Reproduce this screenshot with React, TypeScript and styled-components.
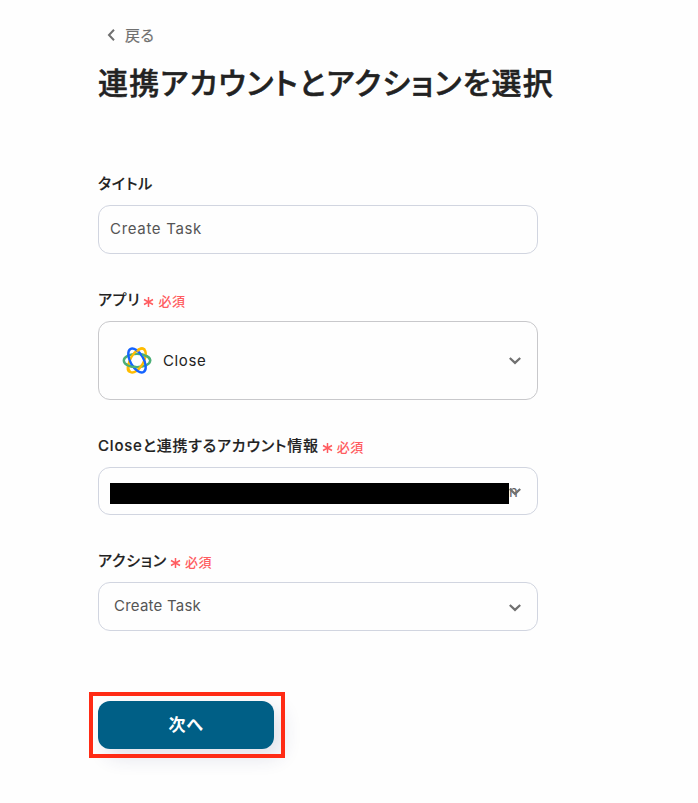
import React from 'react';
import styled, { createGlobalStyle } from 'styled-components';

const GlobalStyle = createGlobalStyle`
  *, *::before, *::after { box-sizing: border-box; }
  body {
    margin: 0;
    background: #fefefe;
    color: #222;
    font-family: Inter, "Noto Sans CJK JP", sans-serif;
    font-feature-settings: "palt";
  }
`;

const Page = styled.main`
  min-height: 803px;
  padding: 24px 0 0 98px;
`;

const BackLink = styled.button`
  display: flex;
  align-items: center;
  gap: 9px;
  height: 22px;
  padding: 0 0 0 9px;
  border: 0;
  background: none;
  color: #707070;
  font: inherit;
  font-size: 15px;
  line-height: 22px;
  letter-spacing: 0.5px;
  -webkit-text-stroke: 0.2px currentColor;
`;

const BackText = styled.span`
  padding-top: 1px;
`;

const Title = styled.h1`
  margin: 15px 0 0;
  height: 45px;
  font-size: 30px;
  font-weight: 500;
  line-height: 45px;
  letter-spacing: 1.2px;
  white-space: nowrap;
  -webkit-text-stroke: 0.5px currentColor;
`;

const Form = styled.form`
  display: flex;
  flex-direction: column;
  width: 440px;
  padding-top: 67px;
`;

const Field = styled.div<{ $gap: number }>`
  display: flex;
  flex-direction: column;
  gap: 10px;
  margin-bottom: ${(p) => p.$gap}px;
`;

const Label = styled.div`
  display: flex;
  align-items: center;
  height: 22px;
  font-size: 15px;
  font-weight: 500;
  line-height: 22px;
  letter-spacing: 0.8px;
  white-space: nowrap;
  -webkit-text-stroke: 0.15px currentColor;
`;

const Required = styled.span`
  display: flex;
  align-items: center;
  gap: 4px;
  margin: 1px 0 0 3px;
  color: #ff5c60;
  font-size: 13px;
  letter-spacing: 0.5px;
  -webkit-text-stroke: 0;
`;

const Box = styled.div<{ $height: number; $inset: number; $border?: string }>`
  display: flex;
  align-items: center;
  height: ${(p) => p.$height}px;
  padding: 0 15px 0 ${(p) => p.$inset}px;
  border: 1px solid ${(p) => p.$border ?? '#d1d5e0'};
  border-radius: 12px;
`;

const Value = styled.span<{ $spacing: number; $dark?: boolean }>`
  flex: 1;
  padding-bottom: ${(p) => (p.$dark ? 0 : 1)}px;
  color: ${(p) => (p.$dark ? '#222' : '#555')};
  font-size: 15px;
  line-height: 22px;
  letter-spacing: ${(p) => p.$spacing}px;
`;

const AppLogo = styled.svg`
  flex: none;
  margin-right: 11px;
`;

const Redaction = styled.span`
  flex: none;
  width: 399px;
  height: 21px;
  margin: 4px 0 0;
  background: #000;
`;

const Remainder = styled.span`
  flex: 1;
  width: 0;
  padding-top: 2px;
  color: #666;
  font-size: 15px;
  line-height: 18px;
`;

const CoveredChevron = styled.span`
  display: flex;
  margin: 2px 0 0 -8px;
`;

const SubmitArea = styled.div`
  position: relative;
  width: 176px;
  margin-top: 34px;
`;

const Submit = styled.button`
  display: block;
  width: 176px;
  height: 48px;
  padding: 0 0 3px;
  border: 0;
  border-radius: 12px;
  background: #005f86;
  box-shadow: 8px 8px 20px rgba(40, 50, 110, 0.14);
  color: #fff;
  font: inherit;
  font-feature-settings: inherit;
  font-size: 17px;
  font-weight: 700;
  letter-spacing: 0.7px;
`;

const Highlight = styled.div`
  position: absolute;
  top: -9px;
  left: -9px;
  width: 196px;
  height: 66px;
  border: 4px solid #ff2b15;
  pointer-events: none;
`;

const Chevron = () => (
  <svg width="14" height="10" viewBox="0 0 14 10" fill="none" stroke="#707070" strokeWidth="2.2">
    <path d="M1.8 2 L7 6.9 L12.2 2" />
  </svg>
);

const BackChevron = () => (
  <svg width="9" height="14" viewBox="0 0 9 14" fill="none" stroke="#707070" strokeWidth="2">
    <path d="M7 1.8 L2 7 L7 12.2" />
  </svg>
);

const LowerChevron = styled.span`
  display: flex;
  padding-top: 2px;
`;

const Asterisk = () => (
  <svg width="11" height="12" viewBox="0 0 11 12" stroke="#ff5c60" strokeWidth="1.5">
    <path d="M5.5 2V12M1 4.5L10 9.5M10 4.5L1 9.5" />
  </svg>
);

const CloseLogo = () => (
  <AppLogo width="30" height="30" viewBox="0 0 30 30" fill="none" strokeWidth="2.4">
    <ellipse cx="15" cy="14.5" rx="13.2" ry="6.6" stroke="#4caf78" />
    <ellipse cx="15" cy="14.5" rx="13.2" ry="6.6" stroke="#ffbc00" transform="rotate(-60 15 14.5)" />
    <ellipse cx="15" cy="14.5" rx="13.2" ry="6.6" stroke="#1463ff" transform="rotate(60 15 14.5)" />
    <path d="M15 5.3C18 2.2 21.2 1.5 22.6 3.5" stroke="#ffbc00" />
    <path d="M6.6 17.5C5.3 21.5 5.4 25 8 25.9" stroke="#ffbc00" />
    <path d="M3.1 17.5C5.5 20 10 21.1 15 21.1" stroke="#4caf78" />
    <path d="M20.2 8.6C25 9.7 28.2 11.9 28.2 14.5" stroke="#4caf78" />
  </AppLogo>
);

const RequiredMark = () => (
  <Required>
    <Asterisk />
    必須
  </Required>
);

export default function App() {
  return (
    <>
      <GlobalStyle />
      <Page>
        <BackLink type="button">
          <BackChevron />
          <BackText>戻る</BackText>
        </BackLink>
        <Title>連携アカウントとアクションを選択</Title>
        <Form onSubmit={(e) => e.preventDefault()}>
          <Field $gap={35}>
            <Label>タイトル</Label>
            <Box $height={49} $inset={11}>
              <Value $spacing={0.68}>Create Task</Value>
            </Box>
          </Field>
          <Field $gap={35}>
            <Label>
              アプリ
              <RequiredMark />
            </Label>
            <Box $height={79} $inset={23} $border="#c8c8cb">
              <CloseLogo />
              <Value $spacing={0.6} $dark>Close</Value>
              <Chevron />
            </Box>
          </Field>
          <Field $gap={35}>
            <Label>
              Closeと連携するアカウント情報
              <RequiredMark />
            </Label>
            <Box $height={48} $inset={11}>
              <Redaction />
              <Remainder>n</Remainder>
              <CoveredChevron>
                <Chevron />
              </CoveredChevron>
            </Box>
          </Field>
          <Field $gap={36}>
            <Label>
              アクション
              <RequiredMark />
            </Label>
            <Box $height={49} $inset={15}>
              <Value $spacing={0.22}>Create Task</Value>
              <LowerChevron>
                <Chevron />
              </LowerChevron>
            </Box>
          </Field>
          <SubmitArea>
            <Submit type="submit">次へ</Submit>
            <Highlight />
          </SubmitArea>
        </Form>
      </Page>
    </>
  );
}
